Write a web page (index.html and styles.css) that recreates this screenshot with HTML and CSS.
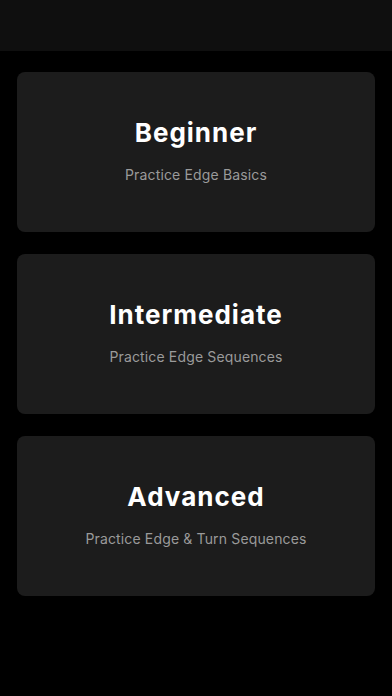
FILE: index.html
```html
<!DOCTYPE html>
<html>
<head>
<meta charset="utf-8">
<link rel="stylesheet" href="styles.css">
</head>
<body>
<header class="topbar"></header>
<main class="list">
  <div class="card">
    <div class="title">Beginner</div>
    <div class="sub">Practice Edge Basics</div>
  </div>
  <div class="card">
    <div class="title">Intermediate</div>
    <div class="sub">Practice Edge Sequences</div>
  </div>
  <div class="card">
    <div class="title">Advanced</div>
    <div class="sub">Practice Edge &amp; Turn Sequences</div>
  </div>
</main>
</body>
</html>
```
FILE: styles.css
```css
html, body {
  margin: 0;
  padding: 0;
  background: #000;
  font-family: Inter, "Noto Sans", sans-serif;
}
body {
  width: 392px;
  height: 696px;
  overflow: hidden;
}
.topbar {
  height: 51px;
  background: #0f0f0f;
}
.list {
  display: flex;
  flex-direction: column;
  gap: 22px;
  padding: 21px 17px 0 17px;
}
.card {
  height: 160px;
  background: #1c1c1c;
  border-radius: 8px;
  display: flex;
  flex-direction: column;
  align-items: center;
  justify-content: center;
  gap: 18px;
  padding-bottom: 4px;
  box-sizing: border-box;
}
.title {
  color: #fff;
  font-size: 26px;
  font-weight: 700;
  line-height: 30px;
  letter-spacing: 1px;
}
.sub {
  color: #9a9a9a;
  font-size: 14px;
  line-height: 17px;
  letter-spacing: 0.15px;
}
```
